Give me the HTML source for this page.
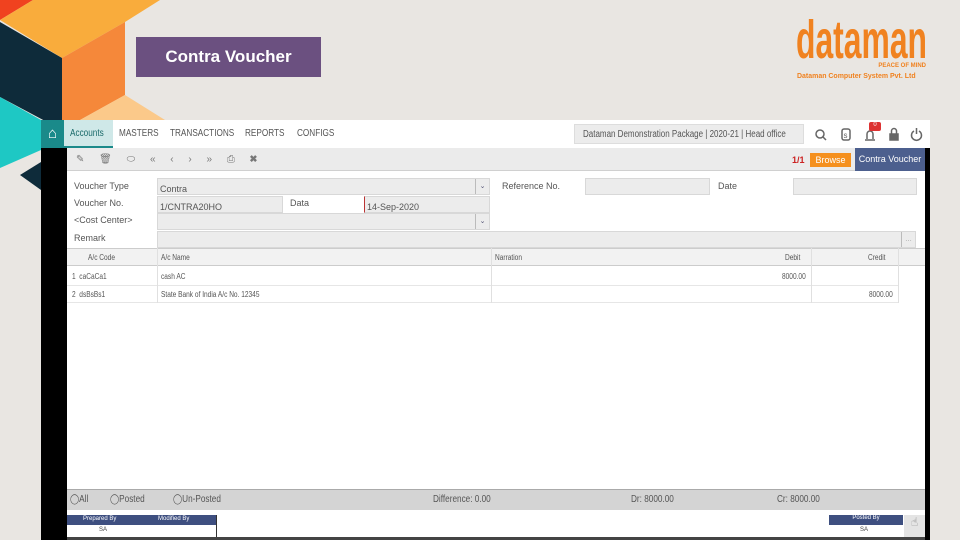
<!DOCTYPE html>
<html><head><meta charset="utf-8"><style>
*{margin:0;padding:0;box-sizing:border-box}
body{width:960px;height:540px;overflow:hidden;background:#e9e6e2;font-family:"Liberation Sans",sans-serif;position:relative;color:#444}
.a{position:absolute}
.t{font-size:9px;color:#555;white-space:nowrap}
.c{transform:scaleX(0.82);transform-origin:left}
.inp{background:#ececec;border:1px solid #d8d8d8}
.dd{position:absolute;right:0;top:0;width:14px;height:100%;border-left:1px solid #bbb;font-size:7px;color:#557;text-align:center;line-height:15px}
</style></head><body>
<svg class="a" style="left:0;top:0" width="170" height="200">
<polygon points="0,0 33,0 0,20" fill="#f0421f"/>
<polygon points="0,20 33,0 160,0 125,22 62,58" fill="#f9ac3c"/>
<polygon points="0,22 62,58 62,130 0,97" fill="#0e2b3a"/>
<polygon points="62,58 125,22 125,95 62,130" fill="#f5883a"/>
<polygon points="62,130 125,95 165,120 62,120" fill="#fbc98a"/>
<polygon points="0,97 41,120 41,150 0,168" fill="#1ec8c4"/>
<polygon points="20,175 41,162 41,190" fill="#0e2b3a"/>
</svg>
<div class="a" style="left:136px;top:37px;width:185px;height:40px;background:#6b5080;color:#fff;font-weight:bold;font-size:17px;line-height:40px;text-align:center">Contra Voucher</div>
<div class="a" style="left:796px;top:12px;color:#f08220;font-weight:bold;font-size:54px;line-height:56px;transform:scaleX(0.59);transform-origin:left">dataman</div>
<div class="a" style="left:866px;top:63px;color:#f08220;font-weight:bold;font-size:6px;width:60px;text-align:right">PEACE OF MIND</div>
<div class="a" style="left:797px;top:71px;color:#f08220;font-weight:bold;font-size:7.5px;transform:scaleX(0.93);transform-origin:left">Dataman Computer System Pvt. Ltd</div>

<div class="a" style="left:41px;top:120px;width:889px;height:420px;background:#fff"></div>
<div class="a" style="left:41px;top:120px;width:23px;height:28px;background:#1a8a8a;color:#fff;font-size:15px;text-align:center;line-height:28px">⌂</div>
<div class="a" style="left:64px;top:120px;width:49px;height:28px;background:#cfe8e8;border-bottom:2px solid #1a8a8a"></div>
<div class="a t c" style="left:70px;top:128px;font-size:10px;color:#1a6a6a">Accounts</div>
<div class="a t c" style="left:119px;top:128px;font-size:10px">MASTERS</div>
<div class="a t c" style="left:170px;top:128px;font-size:10px">TRANSACTIONS</div>
<div class="a t c" style="left:245px;top:128px;font-size:10px">REPORTS</div>
<div class="a t c" style="left:297px;top:128px;font-size:10px">CONFIGS</div>
<div class="a" style="left:574px;top:124px;width:230px;height:20px;background:#ececec;border:1px solid #ddd"></div>
<div class="a t" style="left:583px;top:129px;font-size:10px;transform:scaleX(0.8);transform-origin:left">Dataman Demonstration Package | 2020-21 | Head office</div>
<svg class="a" style="left:810px;top:124px" width="115" height="22" fill="none" stroke="#666" stroke-width="1.5">
<circle cx="10" cy="10" r="4"/><line x1="13" y1="13" x2="16" y2="16"/>
<rect x="32" y="5" width="8" height="11" rx="2"/><text x="33.5" y="14" font-size="8" fill="#666" stroke="none" font-family="Liberation Sans">s</text>
<path d="M55 16h10M57 15v-5a3 3 0 0 1 6 0v5"/>
<rect x="80" y="10" width="8" height="6" fill="#666"/><path d="M81.5 10v-3a2.5 2.5 0 0 1 5 0v3"/>
<path d="M104 7a5 5 0 1 0 5 0M106.5 4v6"/>
</svg>
<div class="a" style="left:869px;top:122px;width:12px;height:9px;background:#d33;color:#fff;font-size:6px;text-align:center;border-radius:2px">0</div>
<div class="a" style="left:41px;top:148px;width:26px;height:392px;background:#000"></div>
<div class="a" style="left:925px;top:148px;width:5px;height:392px;background:#000"></div>
<div class="a" style="left:67px;top:148px;width:858px;height:23px;background:#ebebeb;border-bottom:1px solid #d0d0d0"></div>
<div class="a t" style="left:76px;top:154px;font-size:10px;color:#777;word-spacing:12px">✎ 🗑︎ ⬭ « ‹ › » ⎙ ✖</div>
<div class="a" style="left:792px;top:155px;font-size:9px;color:#c22;font-weight:bold">1/1</div>
<div class="a" style="left:810px;top:153px;width:41px;height:14px;background:#f5901e;color:#fff;font-size:9px;text-align:center;line-height:14px">Browse</div>
<div class="a" style="left:855px;top:148px;width:70px;height:23px;background:#4c5f8e;color:#fff;font-size:9px;text-align:center;line-height:23px">Contra Voucher</div>

<div class="a t" style="left:74px;top:181px">Voucher Type</div>
<div class="a inp" style="left:157px;top:178px;width:333px;height:17px"><span class="t" style="padding-left:2px;line-height:15px">Contra</span><div class="dd">⌄</div></div>
<div class="a t" style="left:74px;top:198px">Voucher No.</div>
<div class="a inp" style="left:157px;top:196px;width:126px;height:17px"><span class="t" style="padding-left:2px;line-height:15px">1/CNTRA20HO</span></div>
<div class="a t" style="left:290px;top:198px">Data</div>
<div class="a inp" style="left:364px;top:196px;width:126px;height:17px;border-left:1px solid #b33"><span class="t" style="padding-left:2px;line-height:15px">14-Sep-2020</span></div>
<div class="a t" style="left:74px;top:215px">&lt;Cost Center&gt;</div>
<div class="a inp" style="left:157px;top:213px;width:333px;height:17px"><div class="dd">⌄</div></div>
<div class="a t" style="left:74px;top:233px">Remark</div>
<div class="a inp" style="left:157px;top:231px;width:759px;height:17px"><div class="dd" style="color:#999">…</div></div>
<div class="a t" style="left:502px;top:181px">Reference No.</div>
<div class="a inp" style="left:585px;top:178px;width:125px;height:17px"></div>
<div class="a t" style="left:718px;top:181px">Date</div>
<div class="a inp" style="left:793px;top:178px;width:124px;height:17px"></div>

<div class="a" style="left:67px;top:248px;width:858px;height:18px;background:#f2f2f2;border-top:1px solid #ccc;border-bottom:1px solid #ccc"></div>
<div class="a t c" style="left:88px;top:253px;font-size:8px">A/c Code</div>
<div class="a t c" style="left:161px;top:253px;font-size:8px">A/c Name</div>
<div class="a t c" style="left:495px;top:253px;font-size:8px">Narration</div>
<div class="a t c" style="left:785px;top:253px;font-size:8px">Debit</div>
<div class="a t c" style="left:868px;top:253px;font-size:8px">Credit</div>
<div class="a" style="left:67px;top:285px;width:832px;height:1px;background:#e6e6e6"></div>
<div class="a" style="left:67px;top:302px;width:832px;height:1px;background:#e6e6e6"></div>
<div class="a" style="left:157px;top:248px;width:1px;height:55px;background:#e0e0e0"></div>
<div class="a" style="left:491px;top:248px;width:1px;height:55px;background:#e0e0e0"></div>
<div class="a" style="left:811px;top:248px;width:1px;height:55px;background:#e0e0e0"></div>
<div class="a" style="left:898px;top:248px;width:1px;height:55px;background:#e0e0e0"></div>
<div class="a t c" style="left:72px;top:272px;font-size:8px">1 &nbsp;caCaCa1</div>
<div class="a t c" style="left:161px;top:272px;font-size:8px">cash AC</div>
<div class="a t c" style="left:782px;top:272px;font-size:8px">8000.00</div>
<div class="a t c" style="left:72px;top:290px;font-size:8px">2 &nbsp;dsBsBs1</div>
<div class="a t c" style="left:161px;top:290px;font-size:8px">State Bank of India A/c No. 12345</div>
<div class="a t c" style="left:869px;top:290px;font-size:8px">8000.00</div>

<div class="a" style="left:67px;top:489px;width:858px;height:21px;background:#d4d4d4;border-top:1px solid #aaa"></div>
<div class="a t c" style="left:70px;top:494px;font-size:10px">◯All</div>
<div class="a t c" style="left:110px;top:494px;font-size:10px">◯Posted</div>
<div class="a t c" style="left:173px;top:494px;font-size:10px">◯Un-Posted</div>
<div class="a t c" style="left:433px;top:494px;font-size:10px">Difference: 0.00</div>
<div class="a t c" style="left:631px;top:494px;font-size:10px">Dr: 8000.00</div>
<div class="a t c" style="left:777px;top:494px;font-size:10px">Cr: 8000.00</div>
<div class="a" style="left:67px;top:515px;width:150px;height:10px;background:#3e4f80"></div>
<div class="a" style="left:216px;top:515px;width:1px;height:22px;background:#333"></div>
<div class="a" style="left:83px;top:516px;color:#fff;font-size:6px">Prepared By</div>
<div class="a" style="left:158px;top:516px;color:#fff;font-size:6px">Modified By</div>
<div class="a" style="left:99px;top:527px;font-size:6px">SA</div>
<div class="a" style="left:829px;top:515px;width:74px;height:10px;background:#3e4f80;color:#fff;font-size:6px;text-align:center">Posted By</div>
<div class="a" style="left:860px;top:527px;font-size:6px">SA</div>
<div class="a" style="left:904px;top:515px;width:21px;height:25px;background:#e4e4e4;font-size:12px;color:#888;text-align:center">☝︎</div>
<div class="a" style="left:67px;top:537px;width:858px;height:3px;background:#444"></div>
</body></html>
